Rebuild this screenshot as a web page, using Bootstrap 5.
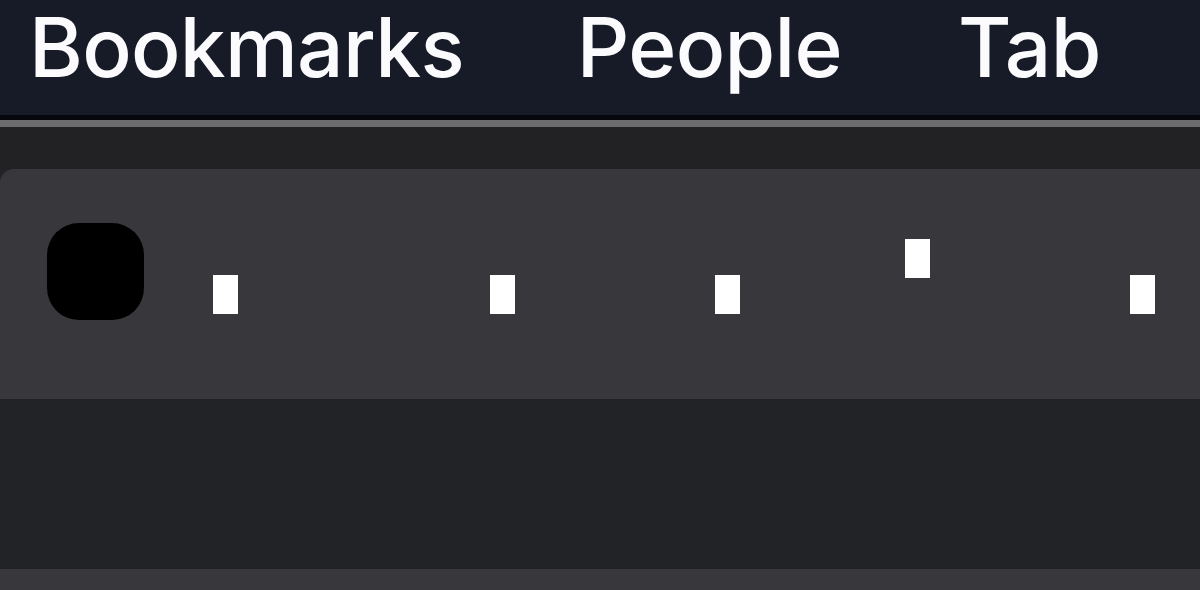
<!DOCTYPE html>
<html lang="en">
<head>
    <meta charset="UTF-8">
    <meta name="viewport" content="width=device-width, initial-scale=1.0">
    <title>Menu bar and tab strip</title>
    <link href="https://cdn.jsdelivr.net/npm/bootstrap@5.3.0/dist/css/bootstrap.min.css" rel="stylesheet">
    <style>
        html, body {
            height: 590px;
            overflow: hidden;
        }

        body {
            background-color: #222326;
            font-family: Inter, "Liberation Sans", sans-serif;
        }

        .menu-strip {
            height: 120px;
            padding-left: 29px;
            background-color: #171b28;
            border-bottom: 5px solid #05070c;
            color: #fbfbfd;
            font-size: 82px;
            font-weight: 500;
            letter-spacing: -0.7px;
            line-height: 95px;
            white-space: nowrap;
        }

        .menu-people {
            margin-left: 113px;
        }

        .menu-tab {
            margin-left: 116px;
        }

        .edge-line {
            height: 7px;
            background-color: #6c6c6f;
        }

        .tab-gap {
            height: 42px;
            background-color: #222224;
        }

        .tab-band {
            height: 230px;
            padding-left: 47px;
            background-color: #38383c;
            border-top-left-radius: 14px;
        }

        .black-tile {
            width: 97px;
            height: 97px;
            margin-top: 54px;
            background-color: #000;
            border-radius: 32px;
        }

        .white-tick {
            width: 25px;
            height: 39px;
            margin-top: 106px;
            background-color: #fff;
        }

        .white-tick.raised {
            margin-top: 70px;
        }

        .tick-1 { margin-left: 69px; }
        .tick-2 { margin-left: 252px; }
        .tick-3 { margin-left: 200px; }
        .tick-4 { margin-left: 165px; }
        .tick-5 { margin-left: 200px; }

        .mid-band {
            height: 170px;
        }

        .low-band {
            height: 21px;
            background-color: #38383c;
        }
    </style>
</head>
<body>
    <div class="menu-strip d-flex">
        <span>Bookmarks</span>
        <span class="menu-people">People</span>
        <span class="menu-tab">Tab</span>
    </div>
    <div class="edge-line"></div>
    <div class="tab-gap"></div>
    <div class="tab-band d-flex align-items-start">
        <div class="black-tile"></div>
        <div class="white-tick tick-1"></div>
        <div class="white-tick tick-2"></div>
        <div class="white-tick tick-3"></div>
        <div class="white-tick raised tick-4"></div>
        <div class="white-tick tick-5"></div>
    </div>
    <div class="mid-band"></div>
    <div class="low-band"></div>
    <script src="https://cdn.jsdelivr.net/npm/bootstrap@5.3.0/dist/js/bootstrap.bundle.min.js"></script>
</body>
</html>
